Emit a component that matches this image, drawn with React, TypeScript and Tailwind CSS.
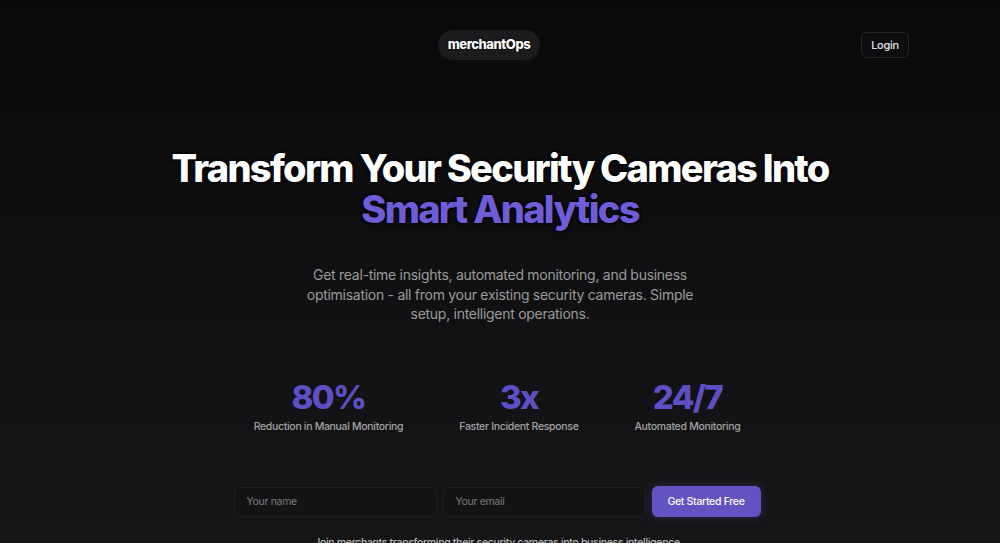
export default function App() {
  const stats = [
    { value: "80%", label: "Reduction in Manual Monitoring" },
    { value: "3x", label: "Faster Incident Response" },
    { value: "24/7", label: "Automated Monitoring" },
  ];

  return (
    <div className="min-h-screen w-full bg-gradient-to-b from-[#0a0a0c] to-[#161618] font-['Inter',sans-serif] text-white overflow-hidden">
      {/* Header */}
      <header className="flex items-center justify-between pt-[30px] px-[91px]">
        <div className="w-[26px]"></div>
        <div className="h-[30px] px-[10px] rounded-full bg-[#1c1c1f] flex items-center text-[13px] font-extrabold tracking-[-0.035em] [text-shadow:0_0_1px_#000,0_0_2px_#000]">
          merchantOps
        </div>
        <button className="h-[26px] w-[48px] rounded-md border border-[#26262a] bg-[#0d0d0f] text-[11px] font-medium tracking-tight text-[#e5e5e5]">
          Login
        </button>
      </header>

      {/* Hero */}
      <section className="flex flex-col items-center text-center mt-[88px]">
        <h1 className="text-[38px] leading-[41px] font-extrabold tracking-[-0.045em] [text-shadow:0_0_2px_#000,0_0_3px_#000,0_0_3px_#000]">
          Transform Your Security Cameras Into
          <br />
          <span className="text-[#6f5dd8]">Smart Analytics</span>
        </h1>

        <p className="mt-[35px] max-w-[392px] text-[14px] leading-[19.5px] tracking-[-0.02em] text-[#9b9b9b]">
          Get real-time insights, automated monitoring, and business optimisation - all from your existing security cameras. Simple setup, intelligent operations.
        </p>

        {/* Stats */}
        <div className="mt-[53px] mr-[6px] flex items-start gap-14">
          {stats.map((s) => (
            <div key={s.label} className="flex flex-col items-center">
              <span className="text-[33px] leading-[40px] font-extrabold tracking-[-0.05em] text-[#5f4fc6]">
                {s.value}
              </span>
              <span className="mt-[2px] text-[10.5px] font-medium tracking-[-0.03em] text-[#a3a3a3]">
                {s.label}
              </span>
            </div>
          ))}
        </div>

        {/* Form */}
        <form className="mt-[52px] mr-[6px] flex items-center gap-[6px]">
          <input
            placeholder="Your name"
            className="h-[30px] w-[203px] rounded-md border border-[#1f1f23] bg-[#131315] px-3 text-[10.5px] tracking-[-0.03em] text-white placeholder:text-[#7c7c7c] outline-none"
          />
          <input
            placeholder="Your email"
            className="h-[30px] w-[203px] rounded-md border border-[#1f1f23] bg-[#131315] px-3 text-[10.5px] tracking-[-0.03em] text-white placeholder:text-[#7c7c7c] outline-none"
          />
          <button
            type="button"
            className="h-[31px] w-[109px] rounded-md bg-[#6352c2] text-[10.5px] font-medium tracking-[-0.03em] text-white shadow-[0_0_10px_rgba(99,82,194,0.35)]"
          >
            Get Started Free
          </button>
        </form>

        <p className="mt-[18px] mr-[6px] text-[10.5px] font-medium tracking-[-0.03em] text-[#b5b5b5]">
          Join merchants transforming their security cameras into business intelligence
        </p>
      </section>
    </div>
  );
}
